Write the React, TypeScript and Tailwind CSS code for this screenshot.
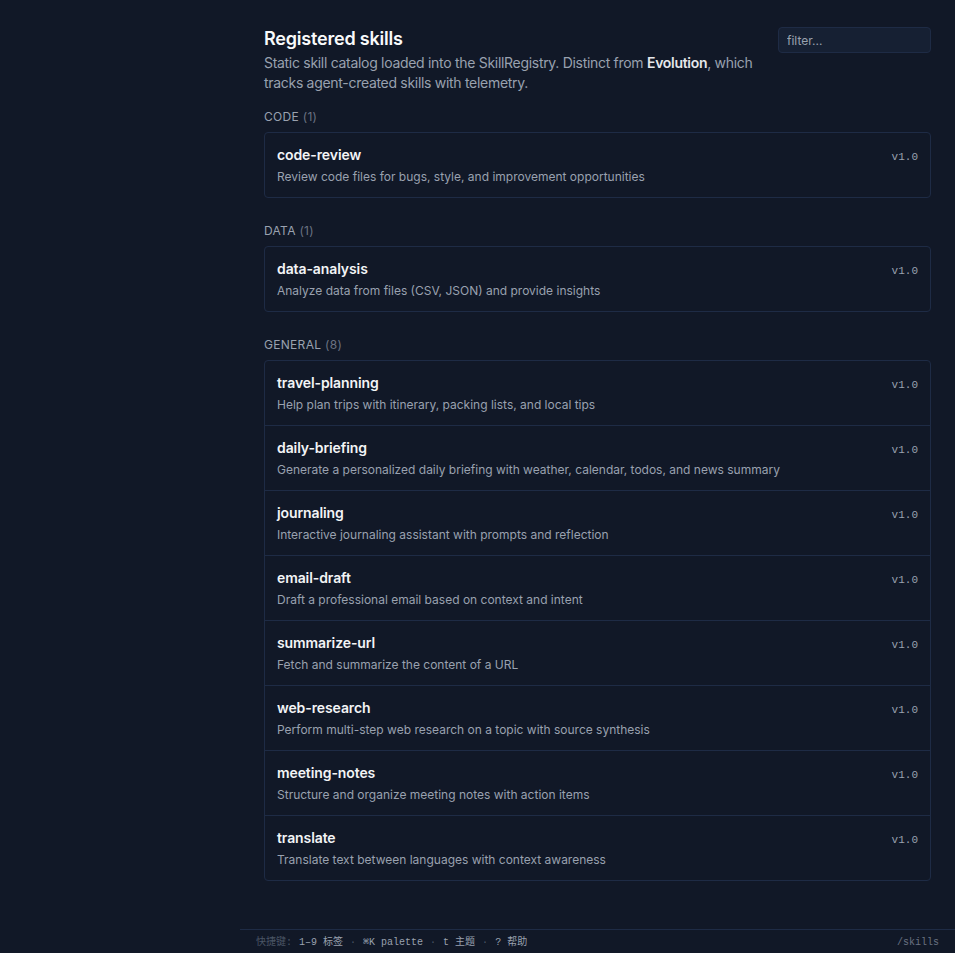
const skills = [
  { group: "code", items: [{ name: "code-review", desc: "Review code files for bugs, style, and improvement opportunities" }] },
  { group: "data", items: [{ name: "data-analysis", desc: "Analyze data from files (CSV, JSON) and provide insights" }] },
  {
    group: "general",
    items: [
      { name: "travel-planning", desc: "Help plan trips with itinerary, packing lists, and local tips" },
      { name: "daily-briefing", desc: "Generate a personalized daily briefing with weather, calendar, todos, and news summary" },
      { name: "journaling", desc: "Interactive journaling assistant with prompts and reflection" },
      { name: "email-draft", desc: "Draft a professional email based on context and intent" },
      { name: "summarize-url", desc: "Fetch and summarize the content of a URL" },
      { name: "web-research", desc: "Perform multi-step web research on a topic with source synthesis" },
      { name: "meeting-notes", desc: "Structure and organize meeting notes with action items" },
      { name: "translate", desc: "Translate text between languages with context awareness" },
    ],
  },
];

const mono = "font-['Liberation_Mono','DejaVu_Sans_Mono','Noto_Sans_CJK_SC',monospace]";

export default function App() {
  return (
    <div className="flex h-screen w-full overflow-hidden bg-[#111827] font-['Inter','Noto_Sans_CJK_SC',sans-serif] text-gray-100">
      <aside className="w-[240px] shrink-0" />
      <div className="flex min-w-0 flex-1 flex-col">
        <main className="flex-1 overflow-hidden px-6 pt-[25px]">
          <div className="flex items-start gap-2">
            <div className="min-w-0 flex-1">
              <h1 className="text-lg font-semibold leading-7 tracking-[-0.2px] text-gray-50">Registered skills</h1>
              <p className="text-sm leading-5 tracking-[-0.3px] text-gray-400">
                Static skill catalog loaded into the SkillRegistry. Distinct from{" "}
                <b className="font-semibold text-gray-200">Evolution</b>, which tracks agent-created skills with
                telemetry.
              </p>
            </div>
            <input
              placeholder="filter..."
              className="mt-[2px] h-[26px] w-[153px] rounded border border-[#1e2b45] bg-[#162033] px-2 text-xs text-gray-200 outline-none placeholder:text-gray-400"
            />
          </div>

          <div className="mt-4">
            {skills.map((s) => (
              <section key={s.group} className="mb-[25px]">
                <h2 className="mb-[7px] text-xs uppercase leading-4 tracking-wide text-gray-400">
                  {s.group} <span className="text-gray-500">({s.items.length})</span>
                </h2>
                <div className="divide-y divide-[#1e2b45] rounded border border-[#1e2b45]">
                  {s.items.map((it) => (
                    <div key={it.name} className="flex items-start justify-between px-3 py-3">
                      <div>
                        <div className="text-sm font-semibold leading-5 tracking-[-0.1px] text-gray-100">{it.name}</div>
                        <div className="mt-1 text-[12px] leading-4 text-gray-400">{it.desc}</div>
                      </div>
                      <span className={`${mono} mt-1 text-[11px] leading-4 text-gray-400`}>v1.0</span>
                    </div>
                  ))}
                </div>
              </section>
            ))}
          </div>
        </main>
        <footer
          className={`${mono} flex h-6 shrink-0 items-center justify-between border-t border-[#1e2b45] px-4 pt-px text-[10px] text-gray-400`}
        >
          <div className="flex items-center gap-[7px] whitespace-pre">
            <span className="text-gray-600">快捷键:</span>
            <span>1–9 标签</span>
            <span className="text-gray-600">·</span>
            <span>⌘K palette</span>
            <span className="text-gray-600">·</span>
            <span>t 主题</span>
            <span className="text-gray-600">·</span>
            <span>? 帮助</span>
          </div>
          <span className="text-gray-500">/skills</span>
        </footer>
      </div>
    </div>
  );
}
